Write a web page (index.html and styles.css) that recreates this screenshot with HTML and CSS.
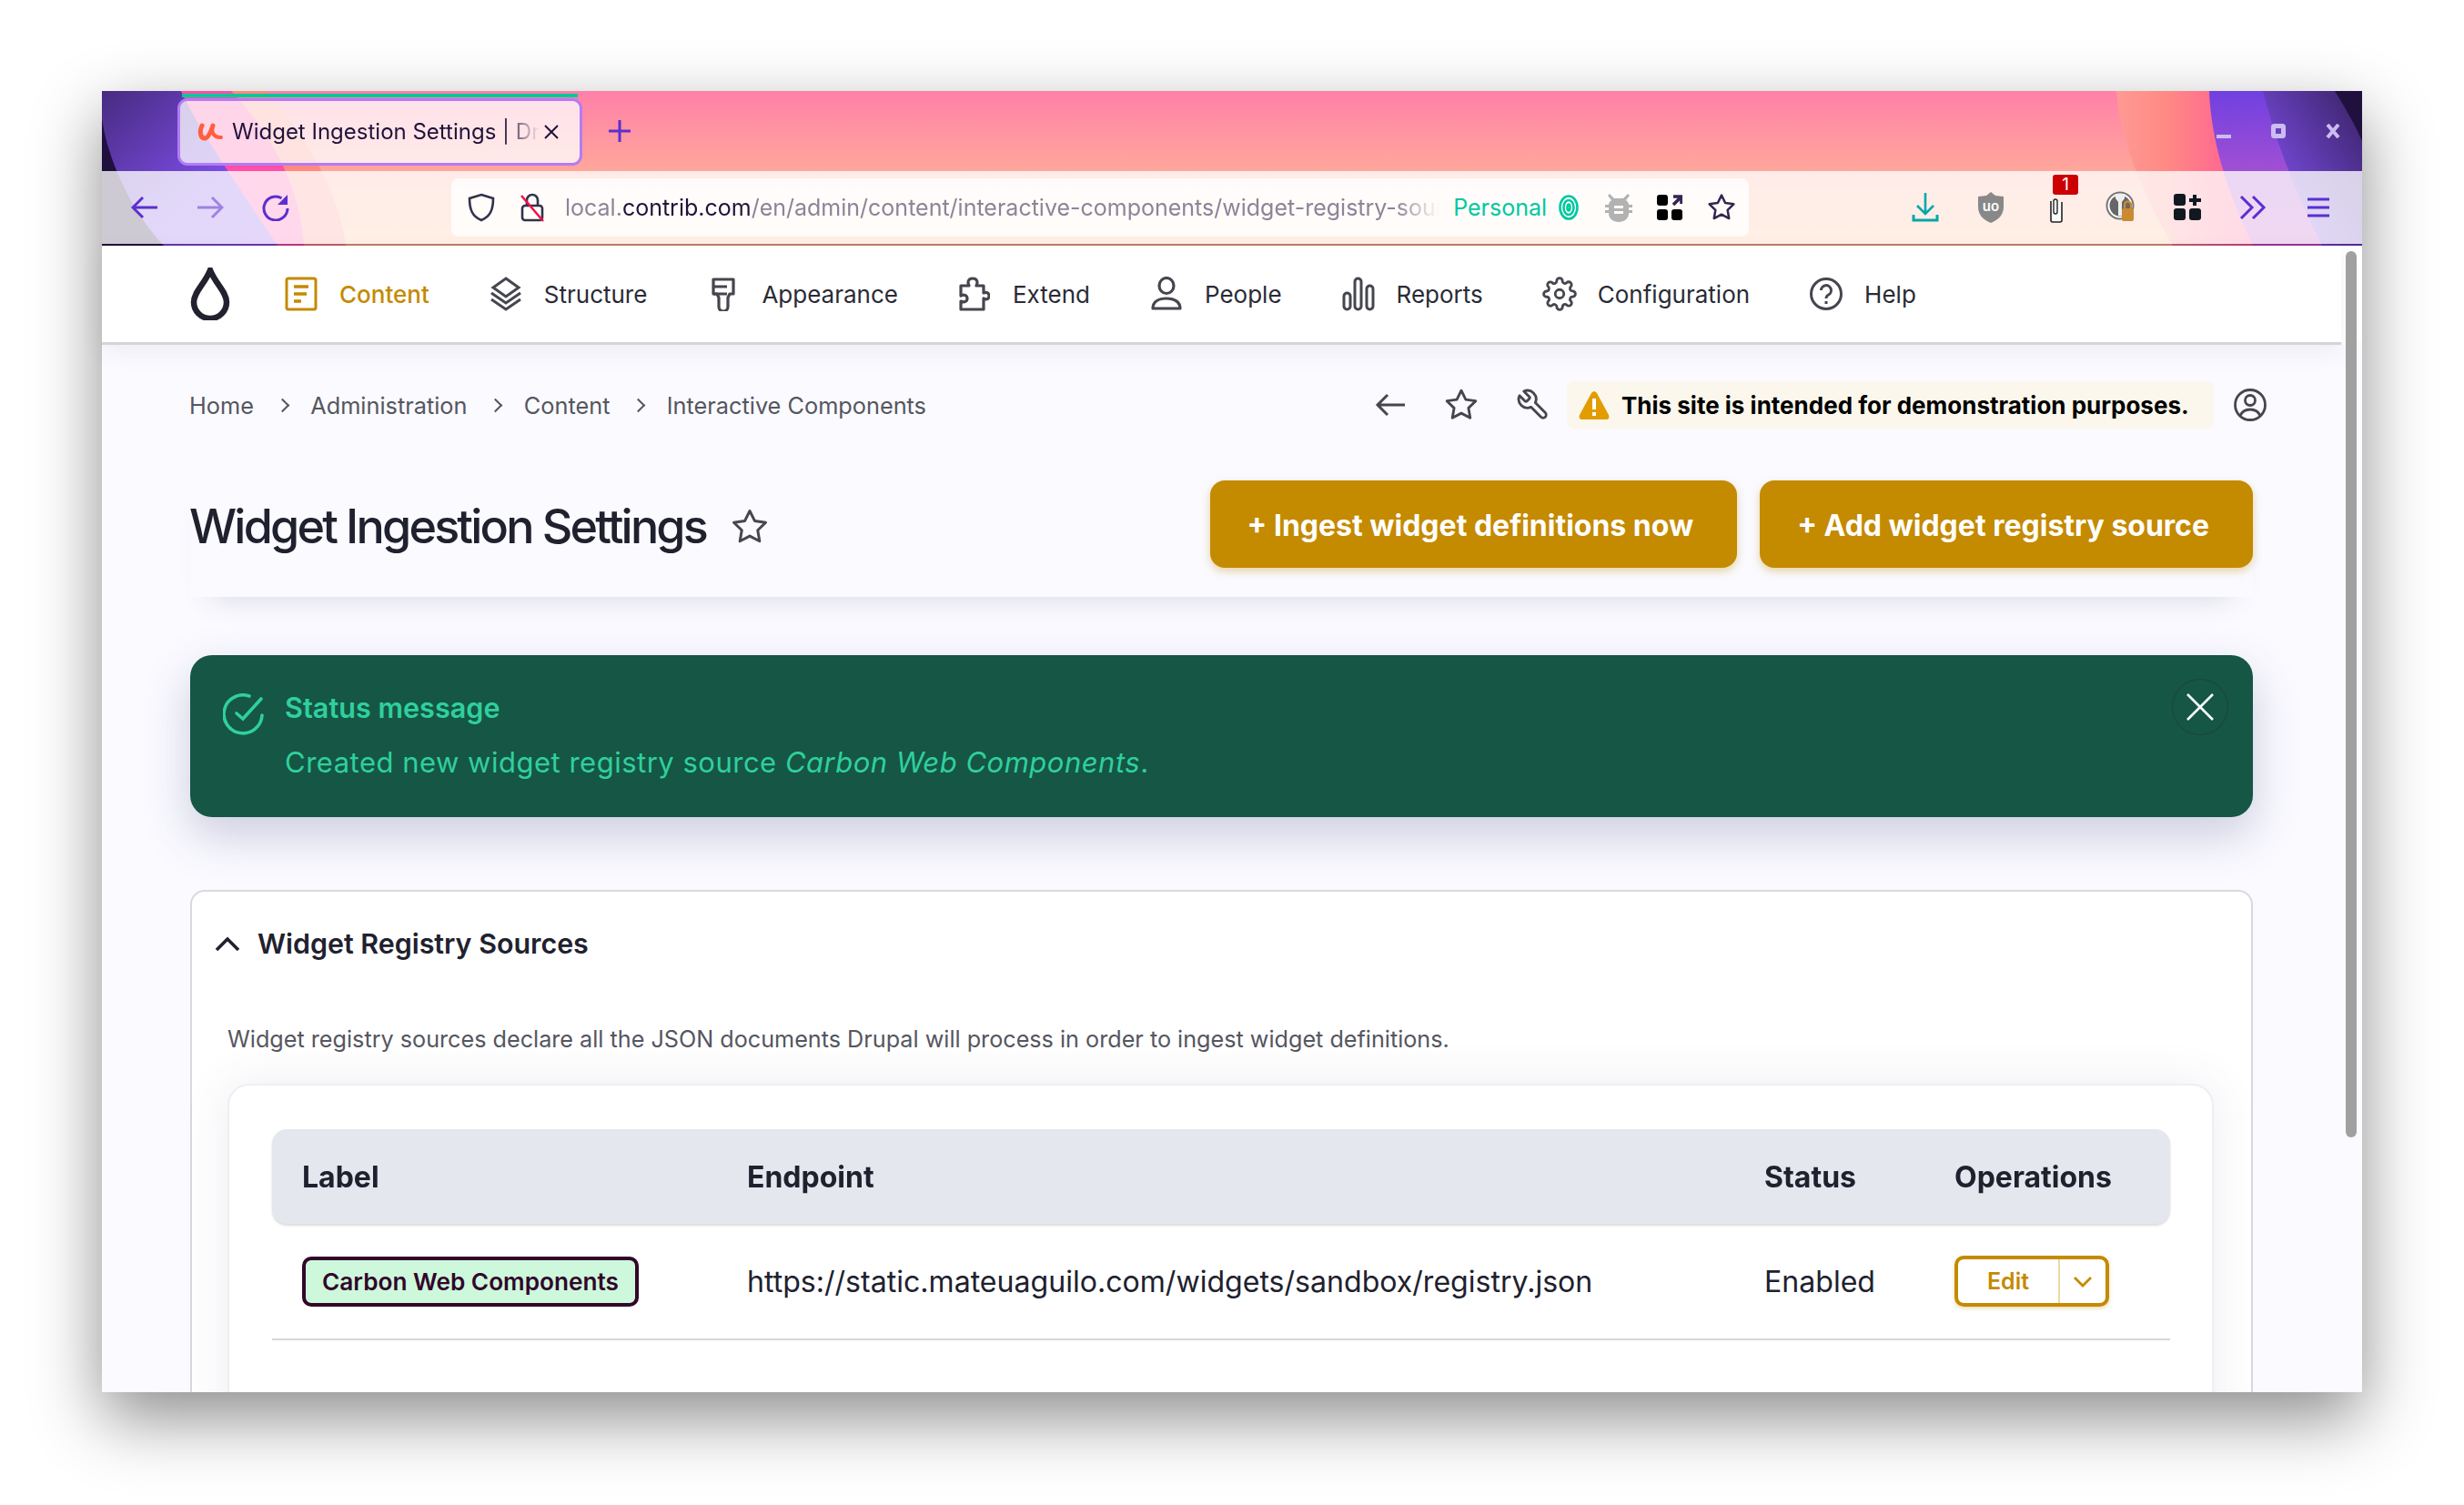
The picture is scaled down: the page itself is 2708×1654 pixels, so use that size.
FILE: index.html
```html
<!DOCTYPE html>
<html lang="en">
<head>
    <meta charset="UTF-8">
    <title>Widget Ingestion Settings | Drupal</title>
    <link rel="stylesheet" href="styles.css">
</head>
<body>
<div class="window">

    <!-- Browser chrome -->
    <header class="chrome">
        <svg class="theme" viewBox="0 0 2484 170" preserveAspectRatio="none">
            <defs>
                <linearGradient id="base" x1="0" y1="0" x2="0" y2="1">
                    <stop offset="0" stop-color="#ff80a8"/>
                    <stop offset="0.52" stop-color="#ffa79b"/>
                    <stop offset="1" stop-color="#ffb888"/>
                </linearGradient>
                <linearGradient id="leftPurple" x1="0" y1="0" x2="1" y2="1">
                    <stop offset="0" stop-color="#472b80"/>
                    <stop offset="0.6" stop-color="#7b4ce4"/>
                    <stop offset="1" stop-color="#8a50e8"/>
                </linearGradient>
                <linearGradient id="rightPink" x1="0" y1="0" x2="1" y2="0">
                    <stop offset="0" stop-color="#ff9a94"/>
                    <stop offset="0.2" stop-color="#ff8a84"/>
                    <stop offset="0.65" stop-color="#ff4a9c"/>
                </linearGradient>
                <linearGradient id="rightPurple" x1="0" y1="0" x2="0" y2="1">
                    <stop offset="0" stop-color="#6f40e0"/>
                    <stop offset="0.5" stop-color="#a04fd4"/>
                    <stop offset="1" stop-color="#c050c0"/>
                </linearGradient>
                <linearGradient id="rightDark" x1="0" y1="1" x2="1" y2="0">
                    <stop offset="0.2" stop-color="#7d4ee8"/>
                    <stop offset="0.85" stop-color="#452a7c"/>
                </linearGradient>
            </defs>
            <rect width="2484" height="170" fill="url(#base)"/>
            <path d="M0 0H180C225 50 260 110 268 170H0Z" fill="#ff8a80"/>
            <path d="M0 0H142C185 45 218 105 222 170H0Z" fill="#ff4fa8"/>
            <path d="M0 0H87C105 40 150 105 193 170H0Z" fill="url(#leftPurple)"/>
            <path d="M0 30C5 70 30 130 68 170H0Z" fill="#20103e"/>
            <path d="M2214 0C2218 60 2250 125 2276 170H2484V0Z" fill="url(#rightPink)"/>
            <path d="M2316 0C2318 60 2340 120 2364 170H2484V0Z" fill="url(#rightPurple)"/>
            <path d="M2375 0C2390 60 2415 120 2440 170H2484V0Z" fill="url(#rightDark)"/>
            <path d="M2454 0C2465 18 2477 38 2484 55V0Z" fill="#20103e"/>
        </svg>

        <div class="tabbar">
            <div class="tab">
                <span class="tab-accent"></span>
                <svg class="tab-logo" width="28" height="20" viewBox="0 0 28 20" fill="none" stroke="#ff5f3c" stroke-linecap="round"><path d="M5 3C2 9 3 17 8 17C12 17 15 9 17 3" stroke-width="5"/><path d="M17 3C15 10 17 16 26 16" stroke-width="4"/></svg>
                <span class="tab-title">Widget Ingestion Settings | Drupal</span>
                <svg class="tab-close" width="18" height="18" viewBox="0 0 18 18"><path d="M2 2L16 16M16 2L2 16" stroke="#20123a" stroke-width="2"/></svg>
            </div>
            <svg class="tab-new" width="26" height="26" viewBox="0 0 26 26"><path d="M13 1V25M1 13H25" stroke="#5b2fd0" stroke-width="3"/></svg>
            <div class="window-controls">
                <svg width="16" height="16" viewBox="0 0 16 16"><rect y="12" width="16" height="4" fill="#cbbdf0"/></svg>
                <svg width="16" height="16" viewBox="0 0 16 16"><rect x="2.5" y="2.5" width="11" height="11" rx="1" fill="none" stroke="#cbbdf0" stroke-width="5"/></svg>
                <svg width="16" height="16" viewBox="0 0 16 16"><path d="M2 1L14 15M14 1L2 15" stroke="#cbbdf0" stroke-width="4"/></svg>
            </div>
        </div>

        <div class="toolbar">
            <div class="tool-nav">
                <svg width="30" height="26" viewBox="0 0 30 26" fill="none" stroke="#5b2fd0" stroke-width="3"><path d="M29 13H2M13 2L2 13L13 24"/></svg>
                <svg class="dimmed" width="30" height="26" viewBox="0 0 30 26" fill="none" stroke="#5b2fd0" stroke-width="3"><path d="M1 13H28M17 2L28 13L17 24"/></svg>
                <svg width="30" height="30" viewBox="0 0 30 30" fill="none"><path d="M21.500 4.700A13 13 0 1 0 28 16" stroke="#5b2fd0" stroke-width="3"/><path d="M28 1V12H17Z" fill="#5b2fd0"/></svg>
            </div>
            <div class="urlbar">
                <svg class="url-icon" width="30" height="32" viewBox="0 0 30 32" fill="none" stroke="#32324a" stroke-width="2.6"><path d="M15 2L28 6C28 18 25 26 15 30C5 26 2 18 2 6Z"/></svg>
                <svg class="url-icon" width="28" height="32" viewBox="0 0 28 32" fill="none"><rect x="3" y="14" width="22" height="16" rx="3" stroke="#32324a" stroke-width="2.6"/><path d="M8 14V8a6 6 0 0 1 12 0V14" stroke="#32324a" stroke-width="2.6"/><path d="M2 3L26 31" stroke="#f0104a" stroke-width="2.6"/></svg>
                <div class="url-text"><span class="url-domain">local.</span><b>contrib.com</b>/en/admin/content/interactive-components/widget-registry-sources/add</div>
                <span class="url-container">Personal</span>
                <svg class="url-print" width="22" height="28" viewBox="0 0 22 28" fill="none" stroke="#00c8a0" stroke-width="2.6"><ellipse cx="11" cy="14" rx="9.5" ry="12.5"/><ellipse cx="11" cy="14" rx="5.500" ry="8"/><ellipse cx="11" cy="14" rx="1.500" ry="3.500"/></svg>
                <svg class="url-bug" width="30" height="32" viewBox="0 0 30 32"><path d="M5 1L10 6H20L25 1L27 3L23 8C25 10 26 11 26 13H30V16H26V19H30V22H26V23C26 28 21 32 15 32C9 32 4 28 4 23V22H0V19H4V16H0V13H4C4 11 5 10 7 8L3 3Z" fill="#b2b2b2"/><rect x="10" y="14" width="10" height="3" fill="#fffbf8"/><rect x="10" y="20" width="10" height="3" fill="#fffbf8"/></svg>
                <svg class="url-ext" width="28" height="28" viewBox="0 0 28 28"><rect width="12" height="12" rx="3" fill="#000"/><rect y="16" width="12" height="12" rx="3" fill="#000"/><rect x="16" y="16" width="12" height="12" rx="3" fill="#000"/><path d="M18 11L25 4M18 2H27V10" fill="none" stroke="#32264f" stroke-width="3.6"/></svg>
                <svg class="url-star" width="32" height="32" viewBox="0 0 24 24" fill="none" stroke="#32264f" stroke-width="1.9" stroke-linejoin="round"><path d="M12 2l3.09 6.26L22 9.27l-5 4.87 1.18 6.88L12 17.77l-6.18 3.25L7 14.14 2 9.27l6.91-1.01L12 2z"/></svg>
            </div>
            <div class="tool-right">
                <span class="tool-icon"><svg width="36" height="32" viewBox="0 0 36 32" fill="none" stroke="#00a8a8" stroke-width="2.6"><path d="M18 0V22M9 14L18 23L27 14"/><path d="M5 24V30H31V24" stroke-width="3"/></svg></span>
                <span class="tool-icon"><svg width="36" height="34" viewBox="0 0 36 34"><path d="M18 0L23 4L32 5V16C32 25 27 30 18 34C9 30 4 25 4 16V5L13 4Z" fill="#888"/><text x="18" y="21" class="ublock">uo</text></svg></span>
                <span class="tool-icon clip">
                    <svg width="20" height="28" viewBox="0 0 20 28" fill="none" stroke="#222"><path d="M4 3V24a2 2 0 0 0 2 2H14a2 2 0 0 0 2-2V4" stroke-width="1.6" fill="#fff"/><path d="M7 3V15a2 2 0 0 0 4 0V3a2 2 0 0 0-4 0" stroke-width="1.4"/></svg>
                    <span class="clip-badge">1</span>
                </span>
                <span class="tool-icon"><svg width="36" height="36" viewBox="0 0 36 36"><circle cx="16" cy="16" r="14.5" fill="#fff" stroke="#777" stroke-width="2"/><circle cx="16" cy="16" r="11.5" fill="#666"/><path d="M11 3H21V8L18 12V27H14V12L11 8Z" fill="#eee"/><rect x="18" y="19" width="13" height="14" rx="2" fill="#c98a30"/><path d="M21 19V15a3.500 3.500 0 0 1 7 0V19" fill="none" stroke="#c98a30" stroke-width="2.4"/></svg></span>
                <span class="tool-icon"><svg width="30" height="30" viewBox="0 0 30 30" fill="#111820"><rect width="13" height="13" rx="3"/><rect y="16" width="13" height="13" rx="3"/><rect x="17" y="16" width="13" height="13" rx="3"/><path d="M21 1H25V5H30V9H25V13H21V9H17V5H21Z"/></svg></span>
                <span class="tool-icon"><svg width="30" height="28" viewBox="0 0 30 28" fill="none" stroke="#5b2fd0" stroke-width="3"><path d="M2 2L14 14L2 26M15 2L27 14L15 26"/></svg></span>
                <span class="tool-icon"><svg width="26" height="24" viewBox="0 0 26 24" fill="none" stroke="#5b2fd0" stroke-width="3"><path d="M1 3H25M1 12H25M1 21H25"/></svg></span>
            </div>
        </div>
    </header>

    <!-- Drupal toolbar -->
    <nav class="adminbar">
        <svg class="drop" width="44" height="58" viewBox="0 0 44 58" fill="none"><path d="M22 3C16 18 4 27 4 38A18 18 0 0 0 40 38C40 27 28 18 22 3Z" stroke="#22222e" stroke-width="6.5"/></svg>
        <a class="nav-item active">
            <span class="nav-icon"><svg width="36" height="38" viewBox="0 0 36 38" fill="none"><rect x="2" y="2" width="32" height="34" rx="2" stroke="#c48a00" stroke-width="3"/><path d="M10 11H26M10 19H24M10 27H18" stroke="#c48a00" stroke-width="3.600"/></svg></span>
            Content
        </a>
        <a class="nav-item">
            <span class="nav-icon"><svg width="38" height="38" viewBox="0 0 38 38" fill="none" stroke="#45464e" stroke-width="3"><path d="M19 2L33 12L19 22L5 12Z"/><path d="M3 18L19 29L35 18M3 25L19 36L35 25"/></svg></span>
            Structure
        </a>
        <a class="nav-item">
            <span class="nav-icon"><svg width="28" height="38" viewBox="0 0 28 38" fill="none" stroke="#45464e" stroke-width="3.200"><path d="M3 3H25V19H21L19 23V33A5 5 0 0 1 9 33V23L7 19H3Z" stroke-linejoin="round"/><path d="M3 11H18M3 19H18" /></svg></span>
            Appearance
        </a>
        <a class="nav-item">
            <span class="nav-icon"><svg width="34" height="38" viewBox="0 0 34 38" fill="none" stroke="#45464e" stroke-width="3.200" stroke-linejoin="round"><path d="M2 10H11C9 6 10 2 15 2C20 2 21 6 19 10H27V18C31 16 33 19 33 21C33 24 31 26 27 24V36H2V27C6 29 9 27 9 24C9 21 6 19 2 21Z"/></svg></span>
            Extend
        </a>
        <a class="nav-item">
            <span class="nav-icon"><svg width="36" height="38" viewBox="0 0 36 38" fill="none" stroke="#45464e" stroke-width="3.200"><ellipse cx="18" cy="10" rx="8" ry="8.500"/><path d="M3 35C3 28 9 24 18 24C27 24 33 28 33 35Z" stroke-linejoin="round"/></svg></span>
            People
        </a>
        <a class="nav-item">
            <span class="nav-icon"><svg width="36" height="38" viewBox="0 0 36 38" fill="none" stroke="#45464e" stroke-width="3"><rect x="2" y="18" width="7" height="18" rx="3.500"/><rect x="14" y="2" width="7" height="34" rx="3.500"/><rect x="27" y="10" width="7" height="26" rx="3.500"/></svg></span>
            Reports
        </a>
        <a class="nav-item">
            <span class="nav-icon"><svg width="38" height="38" viewBox="0 0 24 24" fill="none" stroke="#45464e" stroke-width="1.800"><circle cx="12" cy="12" r="3"/><path d="M19.4 15a1.65 1.65 0 0 0 .33 1.82l.06.06a2 2 0 0 1 0 2.83 2 2 0 0 1-2.83 0l-.06-.06a1.65 1.65 0 0 0-1.82-.33 1.65 1.65 0 0 0-1 1.51V21a2 2 0 0 1-2 2 2 2 0 0 1-2-2v-.09A1.65 1.65 0 0 0 9 19.4a1.65 1.65 0 0 0-1.82.33l-.06.06a2 2 0 0 1-2.83 0 2 2 0 0 1 0-2.83l.06-.06a1.65 1.65 0 0 0 .33-1.82 1.65 1.65 0 0 0-1.51-1H3a2 2 0 0 1-2-2 2 2 0 0 1 2-2h.09A1.65 1.65 0 0 0 4.600 9a1.65 1.65 0 0 0-.33-1.82l-.06-.06a2 2 0 0 1 0-2.83 2 2 0 0 1 2.83 0l.06.06a1.65 1.65 0 0 0 1.82.33H9a1.65 1.65 0 0 0 1-1.51V3a2 2 0 0 1 2-2 2 2 0 0 1 2 2v.09a1.65 1.65 0 0 0 1 1.51 1.65 1.65 0 0 0 1.82-.33l.06-.06a2 2 0 0 1 2.83 0 2 2 0 0 1 0 2.83l-.06.06a1.65 1.65 0 0 0-.33 1.82V9a1.65 1.65 0 0 0 1.51 1H21a2 2 0 0 1 2 2 2 2 0 0 1-2 2h-.09a1.65 1.65 0 0 0-1.51 1z"/></svg></span>
            Configuration
        </a>
        <a class="nav-item">
            <span class="nav-icon"><svg width="38" height="38" viewBox="0 0 38 38" fill="none" stroke="#45464e" stroke-width="3"><circle cx="19" cy="19" r="16.500"/><path d="M13.500 15a5.500 5.500 0 1 1 8 5c-2 1-2.500 2-2.500 4"/><path d="M19 27V30"/></svg></span>
            Help
        </a>
    </nav>

    <!-- Page -->
    <main class="page">
        <div class="crumbs">
            <ol class="breadcrumb">
                <li>Home</li>
                <li class="sep"></li>
                <li>Administration</li>
                <li class="sep"></li>
                <li>Content</li>
                <li class="sep"></li>
                <li>Interactive Components</li>
            </ol>
            <div class="page-tools">
                <svg width="36" height="28" viewBox="0 0 36 28" fill="none" stroke="#45464e" stroke-width="3"><path d="M34 14H4M15 3L4 14L15 25"/></svg>
                <svg width="38" height="38" viewBox="0 0 24 24" fill="none" stroke="#45464e" stroke-width="1.800" stroke-linejoin="round"><path d="M12 2l3.090 6.260L22 9.270l-5 4.870 1.180 6.880L12 17.770l-6.180 3.250L7 14.140 2 9.270l6.910-1.010L12 2z"/></svg>
                <svg width="38" height="38" viewBox="0 0 24 24" fill="none" stroke="#45464e" stroke-width="1.800" stroke-linejoin="round"><path transform="translate(24 0) scale(-1 1)" d="M14.700 6.300a1 1 0 0 0 0 1.400l1.600 1.600a1 1 0 0 0 1.400 0l3.770-3.770a6 6 0 0 1-7.940 7.940l-6.910 6.910a2.120 2.120 0 0 1-3-3l6.910-6.910a6 6 0 0 1 7.940-7.940l-3.760 3.760z"/></svg>
            </div>
            <div class="demo-note">
                <svg width="34" height="32" viewBox="0 0 34 32"><path d="M17 1C18 1 19 2 20 3L33 27C34 30 33 32 30 32H4C1 32 0 30 1 27L14 3C15 2 16 1 17 1Z" fill="#e39c00"/><rect x="15" y="9" width="4" height="12" fill="#fff"/><rect x="15" y="24" width="4" height="4" fill="#fff"/></svg>
                This site is intended for demonstration purposes.
            </div>
            <svg class="user-icon" width="38" height="38" viewBox="0 0 38 38" fill="none" stroke="#45464e" stroke-width="2.800"><circle cx="19" cy="19" r="16.500"/><circle cx="19" cy="14" r="5.500"/><path d="M8 31C10 26 14 24 19 24C24 24 28 26 30 31"/></svg>
        </div>

        <div class="title-bar">
            <h1>Widget Ingestion Settings</h1>
            <svg class="title-star" width="42" height="42" viewBox="0 0 24 24" fill="none" stroke="#45464e" stroke-width="1.700" stroke-linejoin="round"><path d="M12 2l3.090 6.260L22 9.270l-5 4.870 1.180 6.880L12 17.770l-6.180 3.250L7 14.140 2 9.270l6.910-1.010L12 2z"/></svg>
            <div class="actions">
                <a class="btn">+ Ingest widget definitions now</a>
                <a class="btn">+ Add widget registry source</a>
            </div>
        </div>

        <div class="status">
            <svg class="status-icon" width="46" height="46" viewBox="0 0 46 46" fill="none" stroke="#2fd09d" stroke-width="3.600" stroke-linecap="round"><path d="M43 24A21 21 0 1 1 29 3"/><path d="M15 22L22 28L42 6"/></svg>
            <div class="status-body">
                <h2>Status message</h2>
                <p>Created new widget registry source <em>Carbon Web Components</em>.</p>
            </div>
            <span class="status-close"><svg width="32" height="32" viewBox="0 0 32 32"><path d="M2 2L30 30M30 2L2 30" stroke="#fff" stroke-width="2.600"/></svg></span>
        </div>

        <section class="sources">
            <div class="sources-head">
                <svg width="30" height="18" viewBox="0 0 30 18" fill="none" stroke="#22222e" stroke-width="3.600"><path d="M3 16L15 4L27 16"/></svg>
                <h3>Widget Registry Sources</h3>
            </div>
            <p class="sources-desc">Widget registry sources declare all the JSON documents Drupal will process in order to ingest widget definitions.</p>
            <div class="table-card">
                <table class="sources-table">
                    <colgroup>
                        <col class="col-label">
                        <col class="col-endpoint">
                        <col class="col-status">
                        <col class="col-ops">
                    </colgroup>
                    <thead>
                        <tr>
                            <th>Label</th>
                            <th>Endpoint</th>
                            <th>Status</th>
                            <th>Operations</th>
                        </tr>
                    </thead>
                    <tbody>
                        <tr>
                            <td><span class="badge">Carbon Web Components</span></td>
                            <td>https://static.mateuaguilo.com/widgets/sandbox/registry.json</td>
                            <td>Enabled</td>
                            <td>
                                <div class="dropbutton">
                                    <a class="drop-main">Edit</a>
                                    <span class="drop-toggle"><svg width="22" height="13" viewBox="0 0 22 13" fill="none" stroke="#c48a00" stroke-width="2.800"><path d="M2 2L11 11L20 2"/></svg></span>
                                </div>
                            </td>
                        </tr>
                    </tbody>
                </table>
            </div>
        </section>
    </main>

    <div class="scroll-thumb"></div>
</div>
</body>
</html>
```

FILE: styles.css
```css
* {
    box-sizing: border-box;
}

body {
    margin: 0;
    padding: 100px 112px 124px;
    background: #fff;
    font-family: "Inter", "Liberation Sans", sans-serif;
    color: #20212e;
}

svg {
    display: block;
    flex: none;
}

.window {
    position: relative;
    height: 1430px;
    display: flex;
    flex-direction: column;
    background: #fafaff;
    box-shadow: 0 28px 70px rgba(0, 0, 0, 0.45);
}

/* Browser chrome */
.chrome {
    position: relative;
    flex: none;
    height: 170px;
    overflow: hidden;
}

.theme {
    position: absolute;
    left: 0;
    top: 0;
    width: 100%;
    height: 100%;
}

.tabbar {
    position: relative;
    height: 88px;
    display: flex;
    align-items: center;
}

.tab {
    position: relative;
    margin-left: 83px;
    margin-top: 1px;
    width: 445px;
    height: 74px;
    display: flex;
    align-items: center;
    padding: 0 22px 0 19px;
    border: 3px solid #b37bf5;
    border-radius: 11px;
    background: rgba(255, 255, 255, 0.76);
    font-size: 24px;
    color: #20123a;
}

.tab-accent {
    position: absolute;
    left: 2px;
    right: 2px;
    top: -8px;
    height: 4px;
    background: #00c89a;
}

.tab-logo {
    margin-right: 10px;
}

.tab-title {
    flex: 1;
    min-width: 0;
    white-space: nowrap;
    overflow: hidden;
    -webkit-mask-image: linear-gradient(to right, #000 88%, transparent 100%);
    mask-image: linear-gradient(to right, #000 88%, transparent 100%);
}

.tab-close {
    margin-left: 4px;
}

.tab-new {
    margin-left: 28px;
}

.window-controls {
    margin-left: auto;
    margin-right: 24px;
    display: flex;
    gap: 44px;
}

.toolbar {
    position: relative;
    height: 82px;
    display: flex;
    align-items: center;
    padding: 0 30px 0 32px;
    background: rgba(255, 255, 255, 0.78);
    background-clip: padding-box;
    border-bottom: 2px solid rgba(40, 0, 40, 0.32);
}

.tool-nav {
    display: flex;
    align-items: center;
    gap: 42px;
}

.dimmed {
    opacity: 0.5;
}

.urlbar {
    margin-left: 178px;
    width: 1426px;
    height: 64px;
    display: flex;
    align-items: center;
    border-radius: 8px;
    background: rgba(255, 255, 255, 0.8);
    padding: 0 14px 0 18px;
    font-size: 25px;
}

.url-icon {
    margin-right: 27px;
}

.url-icon + .url-icon {
    margin-right: 22px;
}

.url-text {
    flex: 1;
    min-width: 0;
    white-space: nowrap;
    overflow: hidden;
    color: #8d8498;
    -webkit-mask-image: linear-gradient(to right, #000 95%, transparent 100%);
    mask-image: linear-gradient(to right, #000 95%, transparent 100%);
}

.url-text b {
    font-weight: 400;
    color: #20123a;
}

.url-container {
    margin-left: 15px;
    color: #00c8a0;
}

.url-print {
    margin-left: 13px;
}

.url-bug {
    margin-left: 29px;
}

.url-ext {
    margin-left: 27px;
}

.url-star {
    margin-left: 27px;
}

.tool-right {
    margin-left: auto;
    display: flex;
    align-items: center;
    gap: 36px;
}

.tool-icon {
    width: 36px;
    display: flex;
    justify-content: center;
}

.ublock {
    font-size: 15px;
    font-weight: 600;
    fill: #fff;
    text-anchor: middle;
}

.clip {
    position: relative;
    padding-top: 8px;
}

.clip-badge {
    position: absolute;
    left: 14px;
    top: -18px;
    width: 28px;
    height: 22px;
    border-radius: 3px;
    background: #cc0000;
    color: #fff;
    font-size: 19px;
    line-height: 22px;
    text-align: center;
}

/* Drupal toolbar */
.adminbar {
    position: relative;
    z-index: 2;
    flex: none;
    height: 106px;
    margin-right: 23px;
    display: flex;
    align-items: center;
    gap: 66px;
    padding-left: 97px;
    background: #fff;
    box-shadow: 0 3px 0 #d4d4d9, 0 10px 24px rgba(80, 80, 120, 0.08), 23px 0 0 #fff;
    font-size: 26px;
}

.drop {
    margin-right: -6px;
}

.nav-item {
    display: flex;
    align-items: center;
    gap: 24px;
    color: #2a2b36;
}

.nav-item.active {
    color: #c48a00;
    font-weight: 500;
}

.nav-icon {
    width: 36px;
    display: flex;
    justify-content: center;
}

/* Page */
.page {
    position: relative;
    flex: 1;
    min-height: 0;
    overflow: hidden;
    padding: 0 120px 0 97px;
}

.crumbs {
    height: 138px;
    display: flex;
    align-items: center;
    margin-right: -16px;
}

.breadcrumb {
    list-style: none;
    margin: 0 0 0 -1px;
    padding: 0;
    display: flex;
    align-items: center;
    gap: 25.7px;
    font-size: 25.3px;
    color: #55565f;
}

.sep {
    width: 11px;
    height: 11px;
    border-top: 2px solid #55565f;
    border-right: 2px solid #55565f;
    transform: rotate(45deg);
}

.page-tools {
    margin-left: auto;
    display: flex;
    align-items: center;
    gap: 41px;
}

.demo-note {
    margin-left: 18px;
    width: 711px;
    height: 52px;
    display: flex;
    align-items: center;
    gap: 13px;
    padding-left: 13px;
    border-radius: 8px;
    background: #fbf7ec;
    font-size: 26px;
    font-weight: 700;
    white-space: nowrap;
    color: #000;
}

.user-icon {
    margin-left: 21px;
}

.title-bar {
    height: 142px;
    display: flex;
    align-items: center;
    padding-bottom: 18px;
    box-shadow: 0 24px 30px -24px rgba(80, 80, 120, 0.22);
}

h1 {
    margin: 0 0 0 -1px;
    padding-top: 4px;
    font-size: 52px;
    font-weight: 500;
    letter-spacing: -2.8px;
}

.title-star {
    margin-left: 27px;
    margin-top: 6px;
}

.actions {
    margin-left: auto;
    display: flex;
    gap: 25px;
}

.btn {
    height: 96px;
    display: flex;
    align-items: center;
    padding: 2px 48px 0 41px;
    border-radius: 16px;
    background: #c48a00;
    box-shadow: 0 4px 10px rgba(196, 138, 0, 0.35);
    color: #fff;
    font-size: 32px;
    font-weight: 700;
    white-space: nowrap;
}

.status {
    margin-top: 64px;
    height: 178px;
    display: flex;
    align-items: flex-start;
    padding: 37px 30px 0 36px;
    border-radius: 24px;
    background: #155645;
    box-shadow: 0 20px 50px rgba(70, 70, 130, 0.25);
    color: #2fd09d;
}

.status-icon {
    margin-top: 5px;
}

.status-body {
    margin-left: 22px;
}

.status-body h2 {
    margin: 0;
    font-size: 30.6px;
    line-height: 42px;
    font-weight: 600;
}

.status-body p {
    margin: 18px 0 0;
    font-size: 31px;
    line-height: 42px;
    letter-spacing: 0.5px;
}

.status-close {
    margin-left: auto;
    width: 60px;
    height: 60px;
    margin-top: -10px;
    margin-right: -2px;
    display: flex;
    align-items: center;
    justify-content: center;
    border-radius: 50%;
    box-shadow: 0 0 0 1px rgba(30, 70, 50, 0.9);
}

.sources {
    margin-top: 80px;
    height: 800px;
    padding: 0 41px 0 39px;
    border: 2px solid #d8d8e0;
    border-radius: 16px;
    background: #fff;
}

.sources-head {
    height: 114px;
    display: flex;
    align-items: center;
    gap: 18px;
    margin-left: -15px;
}

.sources-head h3 {
    margin: 0;
    font-size: 30.4px;
    font-weight: 600;
}

.sources-desc {
    margin: 30px 0 0;
    font-size: 25.2px;
    line-height: 36px;
    color: #55565f;
}

.table-card {
    margin-top: 31px;
    height: 600px;
    padding: 48px 46px 48px 47px;
    border: 2px solid #eeeef3;
    border-radius: 24px;
    background: #fff;
    box-shadow: 0 0 50px rgba(70, 80, 120, 0.1);
}

.sources-table {
    width: 100%;
    table-layout: fixed;
    border-collapse: separate;
    border-spacing: 0;
    font-size: 32.1px;
}

.sources-table thead {
    filter: drop-shadow(0 2px 1px rgba(0, 0, 0, 0.14));
}

.col-label {
    width: 489px;
}

.col-endpoint {
    width: 1118px;
}

.col-status {
    width: 209px;
}

th {
    height: 104px;
    padding: 0 0 0 33px;
    background: #e4e7ee;
    text-align: left;
    font-size: 32px;
    font-weight: 700;
    white-space: nowrap;
}

th:first-child {
    border-radius: 16px 0 0 16px;
}

th:last-child {
    border-radius: 0 16px 16px 0;
}

td {
    height: 128px;
    padding: 0 0 0 33px;
    border-bottom: 2px solid #d8d8d8;
    white-space: nowrap;
}

.badge {
    display: inline-flex;
    align-items: center;
    height: 55px;
    padding: 0 18px;
    border: 4px solid #32062a;
    border-radius: 10px;
    background: #cdf8dc;
    color: #32062a;
    font-size: 26.2px;
    font-weight: 600;
}

.dropbutton {
    display: flex;
    width: 170px;
    height: 56px;
    border: 4px solid #c48a00;
    border-radius: 10px;
    box-shadow: 0 2px 4px rgba(196, 138, 0, 0.3);
    color: #c48a00;
    font-size: 25px;
    font-weight: 600;
}

.drop-main {
    width: 112px;
    display: flex;
    align-items: center;
    justify-content: center;
    border-right: 2px solid #ecd9a6;
}

.drop-toggle {
    flex: 1;
    display: flex;
    align-items: center;
    justify-content: center;
}

.scroll-thumb {
    position: absolute;
    z-index: 3;
    right: 6px;
    top: 176px;
    width: 12px;
    height: 974px;
    border-radius: 6px;
    background: #a0a0a0;
}
```
